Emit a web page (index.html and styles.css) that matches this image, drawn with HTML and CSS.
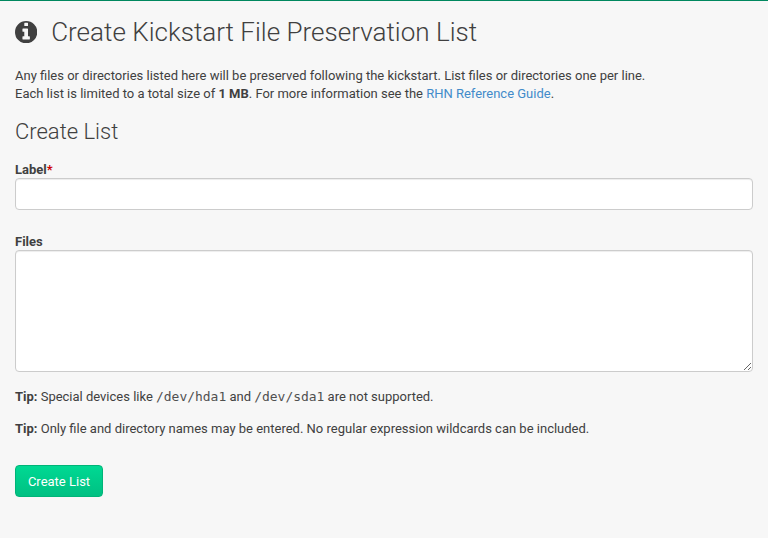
FILE: index.html
```html
<!DOCTYPE html>
<html lang="en">
<head>
<meta charset="utf-8">
<title>Create Kickstart File Preservation List</title>
<link rel="stylesheet" href="styles.css">
</head>
<body>
<main class="content">
<h1><svg class="info-icon" viewBox="0 0 1536 1536" aria-hidden="true"><path fill-rule="evenodd" d="M768 0a768 768 0 1 0 0 1536a768 768 0 1 0 0-1536zM672 128h192q32 0 32 32v160q0 32-32 32h-192q-32 0-32-32v-160q0-32 32-32zM544 512h320q32 0 32 32v512h96q32 0 32 32v160q0 32-32 32h-448q-32 0-32-32v-160q0-32 32-32h96v-320h-96q-32 0-32-32v-160q0-32 32-32z"/></svg>Create Kickstart File Preservation List</h1>
<p class="intro">Any files or directories listed here will be preserved following the kickstart. List files or directories one per line.<br>Each list is limited to a total size of <strong>1 MB</strong>. For more information see the <a href="#">RHN Reference Guide</a>.</p>
<h2>Create List</h2>
<form>
<div class="group"><label for="label">Label<span class="required">*</span></label><input id="label" class="control" type="text"></div>
<div class="group"><label for="files">Files</label><textarea id="files" class="control"></textarea></div>
<p class="tip"><strong>Tip:</strong> Special devices like <tt>/dev/hda1</tt> and <tt>/dev/sda1</tt> are not supported.</p>
<p class="tip"><strong>Tip:</strong> Only file and directory names may be entered. No regular expression wildcards can be included.</p>
<button class="button" type="button">Create List</button>
</form>
</main>
</body>
</html>
```
FILE: styles.css
```css
* { box-sizing: border-box; }
body { margin: 0; height: 538px; overflow: hidden; background: #f7f7f7; border-top: 1px solid #00885f; color: #404040; font: 12.99px/18px Roboto, sans-serif; }
.content { padding: 15px 15px; }
h1, h2 { font-weight: 300; margin: 0; }
h1 { display: flex; align-items: center; font-size: 26.04px; line-height: 32px; }
.info-icon { width: 22.3px; height: 22.3px; margin-right: 13.9px; fill: #404040; }
.intro { margin: 19px 0 0; }
a { color: #428bca; text-decoration: none; }
h2 { margin-top: 17px; font-size: 22px; line-height: 24px; }
form { margin-top: 17px; }
.group { margin-bottom: 23px; }
label { display: block; height: 17px; font-weight: 700; }
.required { color: #c00; }
.control { display: block; width: 100%; height: 32px; padding: 6px 12px; border: 1px solid #ccc; border-radius: 4px; background: #fff; box-shadow: inset 0 1px 1px rgba(0,0,0,.075); font: inherit; }
textarea.control { height: 122px; }
.group:nth-child(2) { margin-bottom: 0; }
.tip { margin: 16px 0 0; line-height: 18px; }
.tip + .tip { margin-top: 14px; font-size: 13px; }
tt { color: #505050; font-family: "DejaVu Sans Mono", monospace; font-size: 12.96px; line-height: 1; }
.button { display: block; width: 88px; height: 32px; margin-top: 27px; padding: 1px 0 0; border: 1px solid #00b478; border-radius: 4px; background: linear-gradient(#00d993, #00c082); color: #fff; font: 13px/18px Roboto, sans-serif; }
```
